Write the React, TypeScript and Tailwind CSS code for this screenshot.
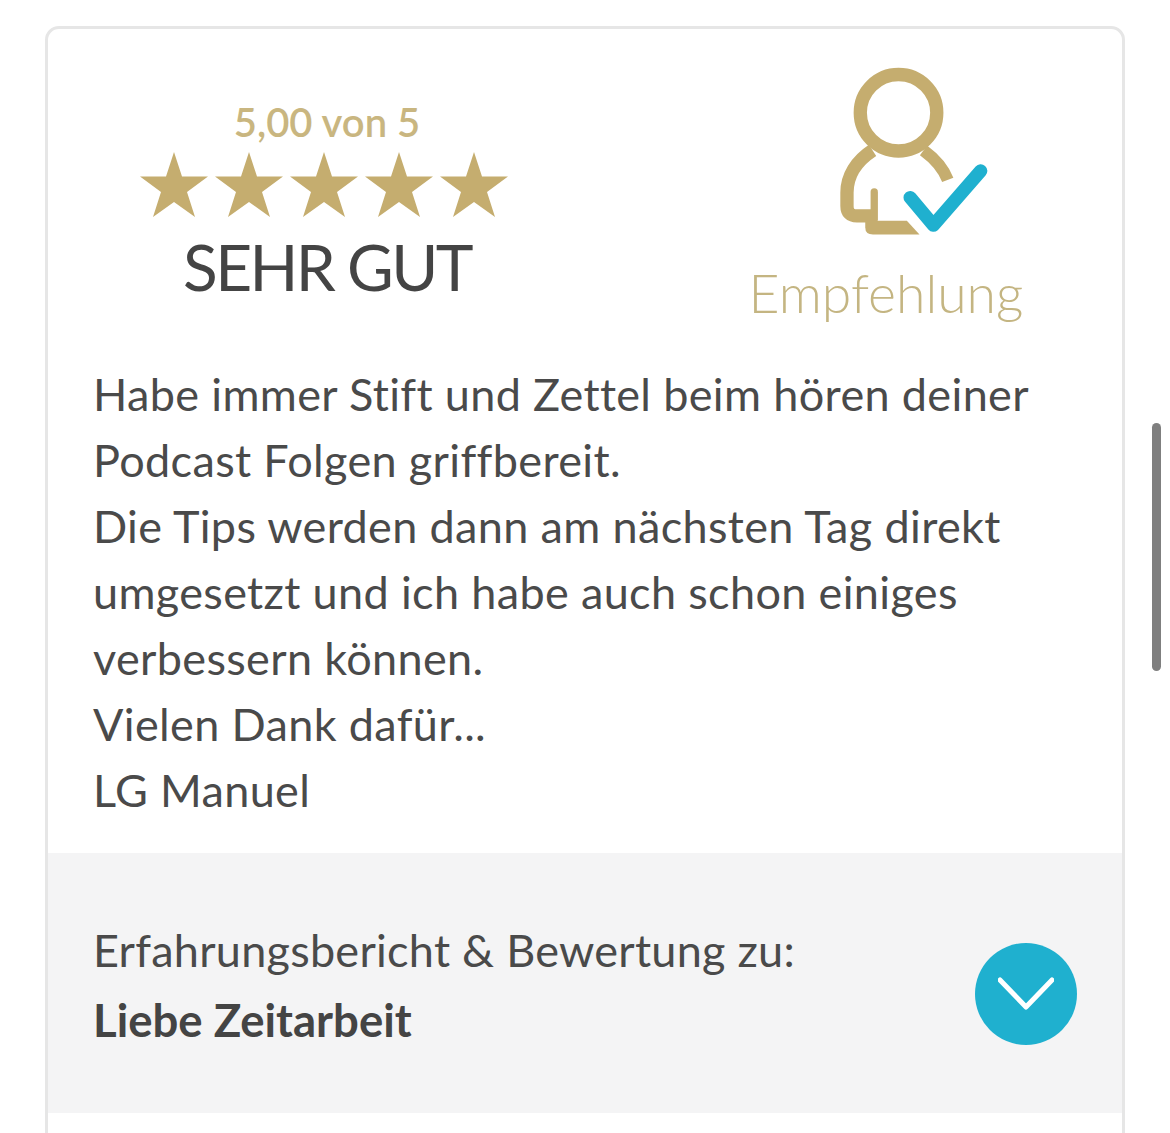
import { Fragment } from 'react'

const starPoints = '34,0 42,24.5 68,24.5 47,40 55,65 34,50 13,65 21,40 0,24.5 26,24.5'

function Stars() {
  return (
    <div className="flex gap-[7px] justify-center">
      {[0, 1, 2, 3, 4].map((i) => (
        <svg key={i} width="68" height="65" viewBox="0 0 68 65">
          <polygon points={starPoints} fill="#c5ad6f" />
        </svg>
      ))}
    </div>
  )
}

function RecommendIcon() {
  return (
    <svg width="153" height="170" viewBox="170 50 460 510" fill="none">
      <circle cx="355" cy="190" r="115" stroke="#c5ad6f" strokeWidth="40" />
      <path d="M277 303 C228 335 200 380 200 430 L200 470 Q200 500 230 500 L282 500" stroke="#c5ad6f" strokeWidth="40" />
      <path d="M430 303 C460 325 488 352 503 392" stroke="#c5ad6f" strokeWidth="36" />
      <path d="M282 428 L282 510" stroke="#c5ad6f" strokeWidth="22" strokeLinecap="round" />
      <path d="M255 515 L380 515 L418 556 L278 556 Q255 556 255 535 Z" fill="#c5ad6f" />
      <path d="M390 445 L460 528 L602 365" stroke="#1fb0cf" strokeWidth="40" strokeLinecap="round" strokeLinejoin="round" />
    </svg>
  )
}

const lines = [
  'Habe immer Stift und Zettel beim hören deiner',
  'Podcast Folgen griffbereit.',
  'Die Tips werden dann am nächsten Tag direkt',
  'umgesetzt und ich habe auch schon einiges',
  'verbessern können.',
  'Vielen Dank dafür...',
  'LG Manuel',
]

export default function App() {
  return (
    <div className="relative h-[1133px] overflow-hidden bg-white pt-[26px] pl-[45px] font-['Lato',sans-serif] text-[#444444] [font-variant-ligatures:none]">
      <div className="w-[1080px] h-[1200px] border-[3px] border-[#e6e6e6] rounded-[14px]">
        {/* Rating + recommendation */}
        <div className="flex h-[310px] pt-[37px]">
          <div className="w-[558px] flex flex-col items-center pt-[32px]">
            <p className="text-[40px] leading-[48px] font-semibold text-[#c9b680]">5,00 von 5</p>
            <div className="mt-[6px] mr-[6px]">
              <Stars />
            </div>
            <p className="text-[64px] leading-[78px] font-normal tracking-[-2.6px] mt-[11px]">SEHR GUT</p>
          </div>
          <div className="flex-1 flex flex-col items-center pl-[44px]">
            <div className="ml-[54px] h-[170px]">
              <RecommendIcon />
            </div>
            <p className="text-[53.5px] leading-[62px] font-light text-[#c4b582] mt-[25px]">Empfehlung</p>
          </div>
        </div>

        {/* Review text */}
        <div className="pl-[45px] pt-[22px] text-[45px] leading-[66px] font-normal tracking-[0.35px] text-[#4a4a4a]">
          {lines.map((l) => (
            <Fragment key={l}>
              {l}
              <br />
            </Fragment>
          ))}
        </div>

        {/* Footer band */}
        <div className="mt-[30px] h-[260px] bg-[#f4f4f5] flex items-center justify-between pl-[45px] pr-[45px]">
          <div className="pt-[3px]">
            <p className="text-[45px] leading-[70px] font-normal tracking-[0.26px] text-[#4a4a4a]">Erfahrungsbericht &amp; Bewertung zu:</p>
            <p className="text-[45.5px] leading-[70px] font-bold">Liebe Zeitarbeit</p>
          </div>
          <div className="mt-[21px] w-[102px] h-[102px] rounded-full bg-[#1fb0cf] flex items-center justify-center">
            <svg width="56" height="34" viewBox="0 0 56 34" fill="none">
              <path d="M2 3 L28 30 L54 3" stroke="white" strokeWidth="5" strokeLinecap="round" strokeLinejoin="round" />
            </svg>
          </div>
        </div>
      </div>

      {/* Overlay scrollbar */}
      <div className="absolute left-[1152px] top-[423px] w-[9px] h-[248px] rounded-full bg-[#7f7f7f]" />
    </div>
  )
}
